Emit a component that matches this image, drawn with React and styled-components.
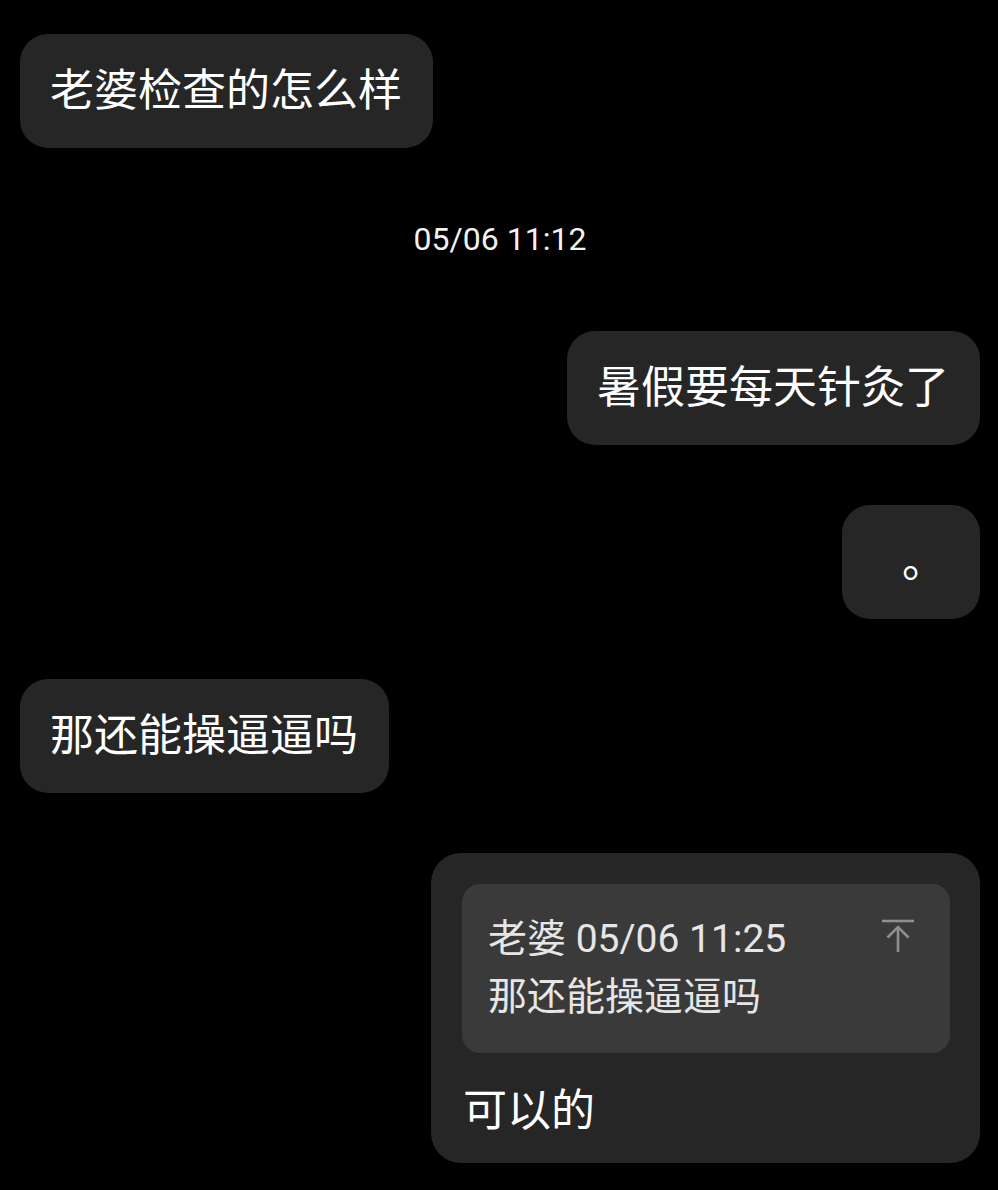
import React from "react";
import styled, { createGlobalStyle, css } from "styled-components";

const GlobalStyle = createGlobalStyle`
    html, body {
        margin: 0;
        padding: 0;
        background: #000;
    }
    body {
        font-family: Roboto, "Noto Sans CJK SC", sans-serif;
        color: #fff;
    }
`;

const StyledChat = styled.div`
    display: flex;
    flex-direction: column;
    gap: 60px;
    padding: 34px 18px 27px 20px;
    min-height: 1190px;
    box-sizing: border-box;
    background: #000;
`;

const StyledRow = styled.div`
    display: flex;
    justify-content: ${props => (props.$mine ? "flex-end" : "flex-start")};
`;

const StyledBubble = styled.div`
    padding: 26px 31px 26px 30px;
    font-size: 44px;
    line-height: 62px;
    color: #fff;
    background-color: #262626;
    border-radius: 28px;

    ${props =>
        props.$dot &&
        css`
            padding: 26px 34px 26px 60px;
        `}
`;

const StyledTime = styled.div`
    height: 63px;
    font-size: 32px;
    line-height: 63px;
    text-align: center;
    color: #f2f2f2;
`;

const StyledReply = styled.div`
    width: 549px;
    box-sizing: border-box;
    padding: 31px 30px 21px 31px;
    background-color: #262626;
    border-radius: 30px;
`;

const StyledQuote = styled.div`
    display: flex;
    justify-content: space-between;
    align-items: flex-start;
    padding: 26px 36px 27px 26px;
    margin-bottom: 27px;
    background-color: #3a3a3a;
    border-radius: 18px;
`;

const StyledQuoteText = styled.div`
    font-size: 39px;
    line-height: 58px;
    color: #e6e6e6;
`;

const StyledJump = styled.svg`
    margin-top: 9px;
    flex-shrink: 0;
`;

const StyledReplyText = styled.div`
    padding-left: 1px;
    font-size: 44px;
    line-height: 62px;
    color: #fff;
`;

const JumpIcon = () => (
    <StyledJump width="32" height="34" viewBox="0 0 32 34" fill="none" stroke="#8e8e8e" strokeWidth="2.6">
        <path d="M0 2 H32" />
        <path d="M16 8 V33" />
        <path d="M5.5 18.5 L16 8 L26.5 18.5" />
    </StyledJump>
);

const App = () => {
    return (
        <>
            <GlobalStyle />
            <StyledChat>
                <StyledRow>
                    <StyledBubble>老婆检查的怎么样</StyledBubble>
                </StyledRow>
                <StyledTime>05/06 11:12</StyledTime>
                <StyledRow $mine>
                    <StyledBubble>暑假要每天针灸了</StyledBubble>
                </StyledRow>
                <StyledRow $mine>
                    <StyledBubble $dot>。</StyledBubble>
                </StyledRow>
                <StyledRow>
                    <StyledBubble>那还能操逼逼吗</StyledBubble>
                </StyledRow>
                <StyledRow $mine>
                    <StyledReply>
                        <StyledQuote>
                            <StyledQuoteText>
                                <div>老婆 05/06 11:25</div>
                                <div>那还能操逼逼吗</div>
                            </StyledQuoteText>
                            <JumpIcon />
                        </StyledQuote>
                        <StyledReplyText>可以的</StyledReplyText>
                    </StyledReply>
                </StyledRow>
            </StyledChat>
        </>
    );
};

export default App;
